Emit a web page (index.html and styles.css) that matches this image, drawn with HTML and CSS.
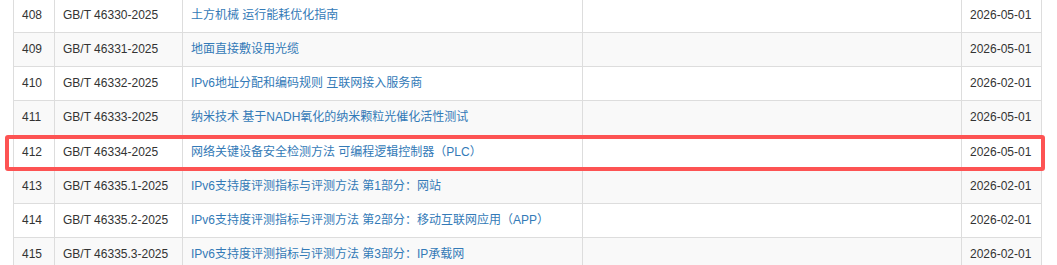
FILE: index.html
```html
<!DOCTYPE html>
<html lang="zh-CN">
<head>
<meta charset="utf-8">
<title>标准列表</title>
<link rel="stylesheet" href="styles.css">
</head>
<body>
<div class="wrap">
  <table class="std-table">
    <colgroup>
      <col class="c-no"><col class="c-code"><col class="c-name"><col class="c-blank"><col class="c-date">
    </colgroup>
    <tbody>
      <tr><td>408</td><td>GB/T 46330-2025</td><td><a href="#">土方机械 运行能耗优化指南</a></td><td></td><td>2026-05-01</td></tr>
      <tr><td>409</td><td>GB/T 46331-2025</td><td><a href="#">地面直接敷设用光缆</a></td><td></td><td>2026-05-01</td></tr>
      <tr><td>410</td><td>GB/T 46332-2025</td><td><a href="#">IPv6地址分配和编码规则 互联网接入服务商</a></td><td></td><td>2026-02-01</td></tr>
      <tr><td>411</td><td>GB/T 46333-2025</td><td><a href="#">纳米技术 基于NADH氧化的纳米颗粒光催化活性测试</a></td><td></td><td>2026-05-01</td></tr>
      <tr><td>412</td><td>GB/T 46334-2025</td><td><a href="#">网络关键设备安全检测方法 可编程逻辑控制器（PLC）</a></td><td></td><td>2026-05-01</td></tr>
      <tr><td>413</td><td>GB/T 46335.1-2025</td><td><a href="#">IPv6支持度评测指标与评测方法 第1部分：网站</a></td><td></td><td>2026-02-01</td></tr>
      <tr><td>414</td><td>GB/T 46335.2-2025</td><td><a href="#">IPv6支持度评测指标与评测方法 第2部分：移动互联网应用（APP）</a></td><td></td><td>2026-02-01</td></tr>
      <tr><td>415</td><td>GB/T 46335.3-2025</td><td><a href="#">IPv6支持度评测指标与评测方法 第3部分：IP承载网</a></td><td></td><td>2026-02-01</td></tr>
    </tbody>
  </table>
  <div class="highlight"></div>
</div>
</body>
</html>
```
FILE: styles.css
```css
html, body {
  margin: 0;
  padding: 0;
  background: #fff;
  overflow: hidden;
}
body {
  font-family: "Liberation Sans", Arial, "Noto Sans CJK SC", sans-serif;
  font-size: 12px;
  line-height: 1.42857;
  color: #333;
}
.wrap {
  position: relative;
  padding-left: 13px;
  margin-top: -2px;
}
.std-table {
  border-collapse: collapse;
  table-layout: fixed;
  width: 1028px;
  border: 1px solid #ddd;
}
.c-no { width: 41px; }
.c-code { width: 128px; }
.c-name { width: 400px; }
.c-blank { width: 379px; }
.c-date { width: 80px; }
.std-table td {
  border: 1px solid #ddd;
  padding: 8px;
  vertical-align: top;
  white-space: nowrap;
  overflow: hidden;
}
.std-table tr:nth-child(even) td {
  background: #f9f9f9;
}
.std-table a {
  color: #337ab7;
  text-decoration: none;
}
.highlight {
  position: absolute;
  left: 5px;
  top: 137px;
  width: 1040px;
  height: 36px;
  box-sizing: border-box;
  border: 4px solid #fd5353;
  border-radius: 3px;
  pointer-events: none;
}
```
